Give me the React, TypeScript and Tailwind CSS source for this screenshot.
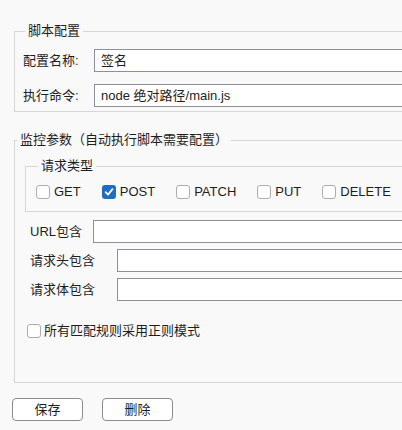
const font = { fontFamily: '"Liberation Sans", "Noto Sans CJK SC", sans-serif' }

function Box({ checked }: { checked?: boolean }) {
  if (checked) {
    return (
      <span className="flex h-[14px] w-[14px] shrink-0 items-center justify-center rounded-[3px] bg-[#1f6dc2]">
        <svg width="10" height="10" viewBox="0 0 10 10" fill="none">
          <path d="M1.6 5.2 L4 7.6 L8.5 2.2" stroke="white" strokeWidth="1.8" strokeLinecap="round" strokeLinejoin="round" />
        </svg>
      </span>
    )
  }
  return <span className="h-[14px] w-[14px] shrink-0 rounded-[3px] border border-[#adadad] bg-white" />
}

function Check({ label, checked }: { label: string; checked?: boolean }) {
  return (
    <label className="flex items-center gap-[4px]">
      <Box checked={checked} />
      <span>{label}</span>
    </label>
  )
}

function Field({ value }: { value?: string }) {
  return (
    <div className="flex h-[23px] flex-1 items-center border border-[#8e8e9e] bg-white px-[6px]">
      {value}
    </div>
  )
}

export default function App() {
  const methods = ['GET', 'POST', 'PATCH', 'PUT', 'DELETE']
  return (
    <div className="h-[430px] w-[402px] overflow-hidden bg-[#f9f9f9] text-[13px] leading-[16px] text-[#1e1e1e]" style={font}>
      <fieldset className="mt-[23px] ml-[14px] w-[420px] border border-[#d6d6d6] pt-[10px] pr-0 pb-[4px] pl-[8px]">
        <legend className="ml-[2px] px-[3px]">脚本配置</legend>
        <div className="flex flex-col gap-[12px]">
          <div className="flex items-center">
            <span className="w-[71px]">配置名称:</span>
            <Field value="签名" />
          </div>
          <div className="flex items-center">
            <span className="w-[71px]">执行命令:</span>
            <Field value="node 绝对路径/main.js" />
          </div>
        </div>
      </fieldset>

      <fieldset className="mt-[20px] ml-[14px] h-[251px] w-[420px] border border-[#d6d6d6] p-0">
        <legend className="ml-[2px] px-[3px]">监控参数（自动执行脚本需要配置）</legend>

        <fieldset className="mt-[10px] ml-[10px] border border-[#d6d6d6] pt-[10px] pr-0 pb-[11px] pl-[10px]">
          <legend className="ml-[2px] px-[3px]">请求类型</legend>
          <div className="flex h-[16px] items-center gap-[21px]">
            {methods.map((m) => (
              <Check key={m} label={m} checked={m === 'POST'} />
            ))}
          </div>
        </fieldset>

        <div className="mt-[8px] flex flex-col gap-[6px] pl-[15px]">
          <div className="flex items-center">
            <span className="w-[63px]">URL包含</span>
            <Field />
          </div>
          <div className="flex items-center">
            <span className="w-[87px]">请求头包含</span>
            <Field />
          </div>
          <div className="flex items-center">
            <span className="w-[87px]">请求体包含</span>
            <Field />
          </div>
        </div>

        <div className="mt-[22px] pl-[12px]">
          <label className="flex items-center gap-[3px]">
            <Box />
            <span>所有匹配规则采用正则模式</span>
          </label>
        </div>
      </fieldset>

      <div className="mt-[15px] ml-[12px] flex gap-[19px]">
        <button className="h-[23px] w-[71px] rounded-[4px] border border-[#8c8c8c] bg-white">保存</button>
        <button className="h-[23px] w-[71px] rounded-[4px] border border-[#8c8c8c] bg-white">删除</button>
      </div>
    </div>
  )
}
